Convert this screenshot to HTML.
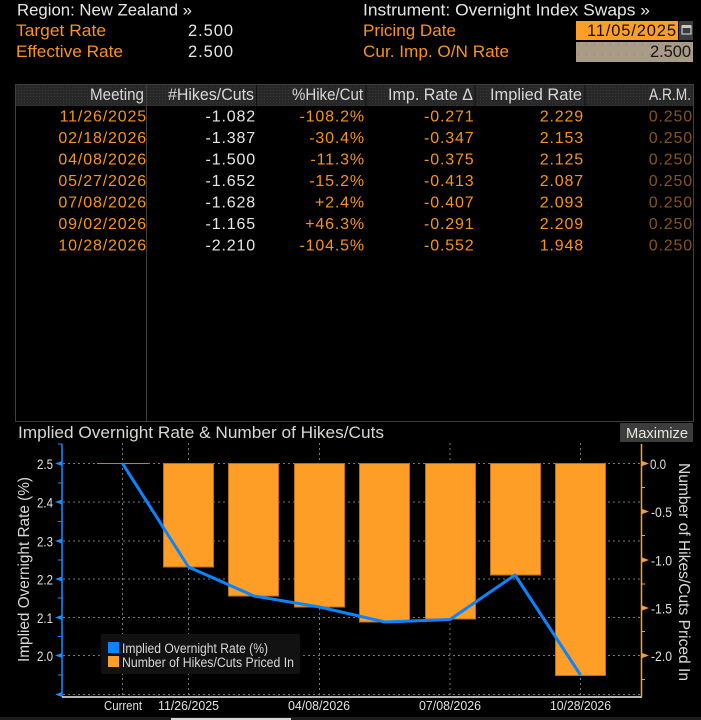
<!DOCTYPE html>
<html><head><meta charset="utf-8"><title>Overnight Index Swaps</title>
<style>
html,body{margin:0;padding:0;background:#000;width:701px;height:720px;overflow:hidden}
svg{display:block}
text{font-family:"Liberation Sans","DejaVu Sans",sans-serif;font-size:16.5px}
.w{fill:#e6e6e6}.o{fill:#f7931e}.d{fill:#85541c}.h{fill:#d8d8d8}
.e{text-anchor:end}
.v{letter-spacing:.85px;font-size:16px;text-anchor:end}
.a{font-size:14px;fill:#e0e0e0}
.x{font-size:13px;fill:#e0e0e0}
.l{font-size:13.5px;fill:#d8d8d8}
</style></head><body>
<svg width="701" height="720" viewBox="0 0 701 720" xmlns="http://www.w3.org/2000/svg">
<defs>
<pattern id="dots" width="3" height="3" patternUnits="userSpaceOnUse"><rect width="3" height="3" fill="#282828"/><rect width="1" height="1" fill="#383838"/></pattern>
<pattern id="dots2" width="8" height="10" patternUnits="userSpaceOnUse"><rect width="8" height="10" fill="#a99b85"/><rect x="2" y="4" width="1" height="1" fill="#8d8170"/></pattern>
</defs>
<rect width="701" height="720" fill="#000"/>

<!-- top -->
<text x="17" y="15.500" class="w" textLength="175" lengthAdjust="spacingAndGlyphs">Region: New Zealand »</text>
<text x="16" y="36" class="o" textLength="90" lengthAdjust="spacingAndGlyphs">Target Rate</text>
<text x="16" y="57" class="o" textLength="107" lengthAdjust="spacingAndGlyphs">Effective Rate</text>
<text x="188" y="36" class="w" textLength="45" lengthAdjust="spacing">2.500</text>
<text x="188" y="57" class="w" textLength="45" lengthAdjust="spacing">2.500</text>
<text x="363" y="15.500" class="w" textLength="287" lengthAdjust="spacingAndGlyphs">Instrument: Overnight Index Swaps »</text>
<text x="363" y="36" class="o" textLength="93" lengthAdjust="spacingAndGlyphs">Pricing Date</text>
<text x="363" y="57" class="o" textLength="146" lengthAdjust="spacingAndGlyphs">Cur. Imp. O/N Rate</text>
<rect x="576" y="21" width="102" height="19" fill="#ff9e27"/>
<text x="587" y="36" fill="#111" textLength="89" lengthAdjust="spacing">11/05/2025</text>
<rect x="679" y="21" width="14" height="19" fill="#3c3c3c"/>
<rect x="682" y="26" width="9" height="8" fill="none" stroke="#c8c8c8" stroke-width="1.2"/>
<rect x="682" y="25" width="9" height="3" fill="#c8c8c8"/>
<rect x="576" y="42" width="117" height="20" fill="url(#dots2)"/>
<text x="650" y="57" fill="#15151a" textLength="41" lengthAdjust="spacing">2.500</text>

<!-- table -->
<rect x="15.5" y="84.5" width="678" height="337" fill="#000" stroke="#3f3f3f"/>
<rect x="16" y="85" width="677" height="21" fill="url(#dots)"/>
<line x1="146.5" y1="85" x2="146.5" y2="421" stroke="#3f3f3f"/>
<g stroke="#111"><line x1="256.5" y1="85" x2="256.5" y2="106"/><line x1="366" y1="85" x2="366" y2="106"/><line x1="475" y1="85" x2="475" y2="106"/><line x1="585" y1="85" x2="585" y2="106"/></g>
<text x="90" y="100" class="h" textLength="54" lengthAdjust="spacingAndGlyphs">Meeting</text>
<text x="168" y="100" class="h" textLength="86" lengthAdjust="spacingAndGlyphs">#Hikes/Cuts</text>
<text x="292" y="100" class="h" textLength="71" lengthAdjust="spacingAndGlyphs">%Hike/Cut</text>
<text x="388" y="100" class="h" textLength="85" lengthAdjust="spacingAndGlyphs">Imp. Rate Δ</text>
<text x="490" y="100" class="h" textLength="92" lengthAdjust="spacingAndGlyphs">Implied Rate</text>
<text x="649" y="100" class="h" textLength="42" lengthAdjust="spacingAndGlyphs">A.R.M.</text>

<text x="147" y="121.500" class="o v">11/26/2025</text><text x="147" y="143" class="o v">02/18/2026</text><text x="147" y="164.500" class="o v">04/08/2026</text><text x="147" y="186" class="o v">05/27/2026</text><text x="147" y="207.500" class="o v">07/08/2026</text><text x="147" y="229" class="o v">09/02/2026</text><text x="147" y="250.500" class="o v">10/28/2026</text>
<text x="256" y="121.500" class="w v">-1.082</text><text x="256" y="143" class="w v">-1.387</text><text x="256" y="164.500" class="w v">-1.500</text><text x="256" y="186" class="w v">-1.652</text><text x="256" y="207.500" class="w v">-1.628</text><text x="256" y="229" class="w v">-1.165</text><text x="256" y="250.500" class="w v">-2.210</text>
<text x="365" y="121.500" class="o v">-108.2%</text><text x="365" y="143" class="o v">-30.4%</text><text x="365" y="164.500" class="o v">-11.3%</text><text x="365" y="186" class="o v">-15.2%</text><text x="365" y="207.500" class="o v">+2.4%</text><text x="365" y="229" class="o v">+46.3%</text><text x="365" y="250.500" class="o v">-104.5%</text>
<text x="474.500" y="121.500" class="o v">-0.271</text><text x="474.500" y="143" class="o v">-0.347</text><text x="474.500" y="164.500" class="o v">-0.375</text><text x="474.500" y="186" class="o v">-0.413</text><text x="474.500" y="207.500" class="o v">-0.407</text><text x="474.500" y="229" class="o v">-0.291</text><text x="474.500" y="250.500" class="o v">-0.552</text>
<text x="584" y="121.500" class="o v">2.229</text><text x="584" y="143" class="o v">2.153</text><text x="584" y="164.500" class="o v">2.125</text><text x="584" y="186" class="o v">2.087</text><text x="584" y="207.500" class="o v">2.093</text><text x="584" y="229" class="o v">2.209</text><text x="584" y="250.500" class="o v">1.948</text>
<text x="693" y="121.500" class="d v">0.250</text><text x="693" y="143" class="d v">0.250</text><text x="693" y="164.500" class="d v">0.250</text><text x="693" y="186" class="d v">0.250</text><text x="693" y="207.500" class="d v">0.250</text><text x="693" y="229" class="d v">0.250</text><text x="693" y="250.500" class="d v">0.250</text>

<!-- chart title -->
<text x="18" y="438" fill="#d8d8d0" textLength="366" lengthAdjust="spacingAndGlyphs">Implied Overnight Rate &amp; Number of Hikes/Cuts</text>
<rect x="620" y="423" width="73" height="19" fill="#3c3c3c"/>
<text x="626" y="438" fill="#e8e8d8" style="font-size:15px" textLength="62" lengthAdjust="spacingAndGlyphs">Maximize</text>

<!-- grid -->
<g stroke="#777" stroke-width="1" stroke-dasharray="2 3" fill="none">
<line x1="63" y1="463.5" x2="641" y2="463.5"/><line x1="63" y1="502" x2="641" y2="502"/><line x1="63" y1="541" x2="641" y2="541"/><line x1="63" y1="579" x2="641" y2="579"/><line x1="63" y1="617.5" x2="641" y2="617.5"/><line x1="63" y1="655.5" x2="641" y2="655.5"/><line x1="63" y1="694.5" x2="641" y2="694.5"/>
<line x1="122.5" y1="443" x2="122.5" y2="697"/><line x1="188.5" y1="443" x2="188.5" y2="697"/><line x1="319.5" y1="443" x2="319.5" y2="697"/><line x1="450" y1="443" x2="450" y2="697"/><line x1="580.5" y1="443" x2="580.5" y2="697"/>
</g>

<!-- bars -->
<g fill="#ff9e27" stroke="#b8701a" stroke-width="1">
<rect x="163.5" y="463.5" width="50" height="103.5"/>
<rect x="228.5" y="463.5" width="50" height="132.5"/>
<rect x="294.5" y="463.5" width="50" height="143.5"/>
<rect x="359.5" y="463.5" width="50" height="158.5"/>
<rect x="425.5" y="463.5" width="50" height="155.5"/>
<rect x="490.5" y="463.5" width="50" height="111.5"/>
<rect x="555.5" y="463.5" width="50" height="212"/>
</g>
<line x1="97" y1="463.5" x2="148" y2="463.5" stroke="#c47f22" stroke-width="1"/>

<!-- line -->
<polyline points="122.5,463.5 188.5,567 254,596 319.5,607 385,622 450,619.5 515,575 580.5,675" fill="none" stroke="#0a84ff" stroke-width="3" stroke-linejoin="round"/>

<!-- axes -->
<line x1="62" y1="444" x2="62" y2="697" stroke="#1a8cff" stroke-width="1.5"/>
<line x1="62" y1="697" x2="642" y2="697" stroke="#f0f0f0" stroke-width="1.5"/>
<line x1="641.5" y1="444" x2="641.5" y2="697" stroke="#ff9e27" stroke-width="1.5"/>
<g fill="#1a8cff">
<path d="M62 461v5l-7-2.500z"/><path d="M62 499.500v5l-7-2.500z"/><path d="M62 538.500v5l-7-2.500z"/><path d="M62 576.500v5l-7-2.500z"/><path d="M62 615v5l-7-2.500z"/><path d="M62 653v5l-7-2.500z"/><path d="M62 692v5l-7-2.500z"/>
</g>
<g stroke="#1a8cff" stroke-width="1"><line x1="58" y1="444" x2="62" y2="444"/><line x1="58" y1="483" x2="62" y2="483"/><line x1="58" y1="521.500" x2="62" y2="521.500"/><line x1="58" y1="560" x2="62" y2="560"/><line x1="58" y1="598" x2="62" y2="598"/><line x1="58" y1="636.500" x2="62" y2="636.500"/><line x1="58" y1="675" x2="62" y2="675"/></g>
<g fill="#ff9e27">
<path d="M642 461v5l7-2.500z"/><path d="M642 509v5l7-2.500z"/><path d="M642 557.500v5l7-2.500z"/><path d="M642 605.500v5l7-2.500z"/><path d="M642 653v5l7-2.500z"/>
</g>
<g stroke="#ff9e27" stroke-width="1"><line x1="642" y1="487.500" x2="645" y2="487.500"/><line x1="642" y1="535.500" x2="645" y2="535.500"/><line x1="642" y1="584" x2="645" y2="584"/><line x1="642" y1="631.500" x2="645" y2="631.500"/><line x1="642" y1="679.500" x2="645" y2="679.500"/></g>

<!-- axis labels -->
<text x="37" y="469" class="a" textLength="16" lengthAdjust="spacingAndGlyphs">2.5</text><text x="37" y="507.500" class="a" textLength="16" lengthAdjust="spacingAndGlyphs">2.4</text><text x="37" y="546.500" class="a" textLength="16" lengthAdjust="spacingAndGlyphs">2.3</text><text x="37" y="584.500" class="a" textLength="16" lengthAdjust="spacingAndGlyphs">2.2</text><text x="37" y="623" class="a" textLength="16" lengthAdjust="spacingAndGlyphs">2.1</text><text x="37" y="661" class="a" textLength="16" lengthAdjust="spacingAndGlyphs">2.0</text>
<text x="650" y="469" class="a" textLength="16" lengthAdjust="spacingAndGlyphs">0.0</text><text x="651" y="517" class="a" textLength="21" lengthAdjust="spacingAndGlyphs">-0.5</text><text x="651" y="565.500" class="a" textLength="21" lengthAdjust="spacingAndGlyphs">-1.0</text><text x="651" y="613.500" class="a" textLength="21" lengthAdjust="spacingAndGlyphs">-1.5</text><text x="651" y="661" class="a" textLength="21" lengthAdjust="spacingAndGlyphs">-2.0</text>
<text transform="translate(29,662) rotate(-90)" fill="#d8d8d8" style="font-size:15.5px" textLength="185" lengthAdjust="spacingAndGlyphs">Implied Overnight Rate (%)</text>
<text transform="translate(679,463) rotate(90)" fill="#d8d8d8" style="font-size:15.5px" textLength="218" lengthAdjust="spacingAndGlyphs">Number of Hikes/Cuts Priced In</text>

<text x="104" y="710" class="x" textLength="38" lengthAdjust="spacingAndGlyphs">Current</text><text x="158" y="710" class="x" textLength="61" lengthAdjust="spacingAndGlyphs">11/26/2025</text><text x="288" y="710" class="x" textLength="62" lengthAdjust="spacingAndGlyphs">04/08/2026</text><text x="419" y="710" class="x" textLength="62" lengthAdjust="spacingAndGlyphs">07/08/2026</text><text x="550" y="710" class="x" textLength="61" lengthAdjust="spacingAndGlyphs">10/28/2026</text>

<!-- legend -->
<rect x="101" y="634" width="199" height="40" rx="2" fill="#121212"/>
<rect x="108" y="642" width="11" height="11" fill="#0a84ff"/>
<rect x="108" y="656" width="11" height="11" fill="#ff9e27"/>
<text x="122" y="653" class="l" textLength="146" lengthAdjust="spacingAndGlyphs">Implied Overnight Rate (%)</text>
<text x="122" y="667" class="l" textLength="172" lengthAdjust="spacingAndGlyphs">Number of Hikes/Cuts Priced In</text>

<!-- bottom strip -->
<rect x="0" y="717" width="701" height="3" fill="#1c1c1c"/>
<rect x="171" y="718" width="120" height="2" fill="#d8d8d8"/>
</svg>
</body></html>
